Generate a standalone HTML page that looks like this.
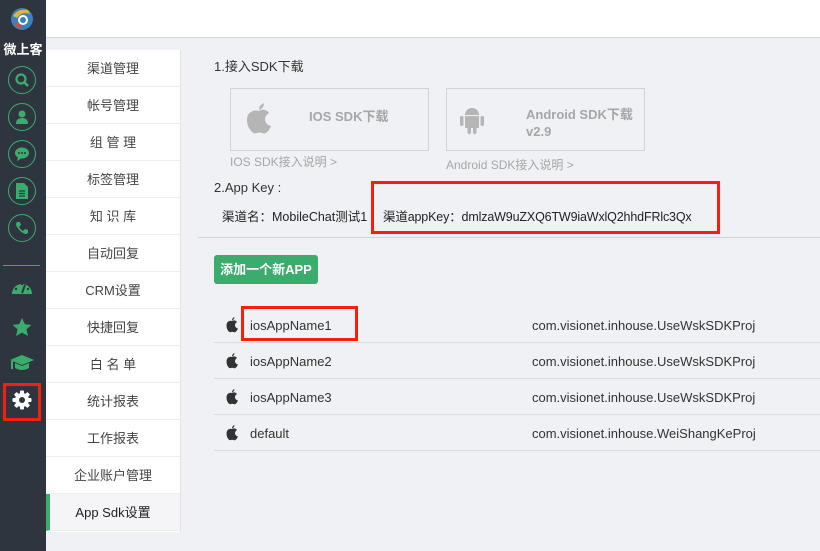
<!DOCTYPE html>
<html><head><meta charset="utf-8"><style>
*{margin:0;padding:0;box-sizing:border-box}
body{width:820px;height:551px;overflow:hidden;background:#f0f1f5;font-family:"Liberation Sans","Noto Sans CJK SC",sans-serif;position:relative;font-size:13px;color:#333}
.side{position:absolute;left:0;top:0;width:46px;height:551px;background:#2e353e}
.top{position:absolute;left:46px;top:0;width:774px;height:38px;background:#fff;border-bottom:1px solid #d9d9d9}
.menu{position:absolute;left:46px;top:50px;width:135px;height:482px;background:#fff;border-right:1px solid #e3e3e3}
.menu div{height:37px;line-height:37px;text-align:center;border-bottom:1px solid #eee;color:#444;font-size:13px}
.menu div.act{background:#f5f5f7;border-left:4px solid #3aad6c;color:#222;padding-right:4px}
.circ{position:absolute;left:8px;width:28px;height:28px;border:1.5px solid #3aad6c;border-radius:50%}
.abs{position:absolute}
.box{position:absolute;border:1px solid #d3d3d3;width:199px;height:63px}
.gray{color:#a6a6a6;font-weight:bold;font-size:13px}
.red{position:absolute;border:3px solid #f2200c}
.row{position:absolute;left:214px;width:606px;height:36px;border-bottom:1px solid #dcdcdc;font-size:13px;color:#333}
.row span{position:absolute;top:11px}
</style></head><body>
<div class="side">
 <svg class="abs" style="left:10px;top:6px" width="24" height="26" viewBox="0 0 24 26"><circle cx="12" cy="13" r="11" fill="#3a7fc0"/><path d="M3 10 Q8 2 18 4 L20 8 Q12 5 7 12Z" fill="#e8b23a"/><path d="M4 16 Q6 22 12 23 L10 18Z" fill="#d94a3a"/><circle cx="13" cy="14" r="5" fill="#fff"/><circle cx="13" cy="14" r="3" fill="#3a7fc0"/></svg>
 <div class="abs" style="left:0;top:39px;width:46px;text-align:center;color:#fff;font-weight:bold;font-size:13px">微上客</div>
 <div class="circ" style="top:66px"></div>
 <svg class="abs" style="left:14px;top:72px" width="16" height="16" viewBox="0 0 16 16"><circle cx="7" cy="7" r="4.5" stroke="#3aad6c" stroke-width="2.2" fill="none"/><path d="M10 10l4 4" stroke="#3aad6c" stroke-width="2.5"/></svg>
 <div class="circ" style="top:103px"></div>
 <svg class="abs" style="left:14px;top:109px" width="16" height="16" viewBox="0 0 16 16"><circle cx="8" cy="5" r="3.5" fill="#3aad6c"/><path d="M2 15 Q2 9 8 9 Q14 9 14 15Z" fill="#3aad6c"/></svg>
 <div class="circ" style="top:140px"></div>
 <svg class="abs" style="left:14px;top:146px" width="16" height="16" viewBox="0 0 16 16"><ellipse cx="8" cy="7" rx="7" ry="5.5" fill="#3aad6c"/><path d="M4 11 L3 15 L8 12Z" fill="#3aad6c"/><circle cx="5" cy="7" r="1" fill="#2e353e"/><circle cx="8" cy="7" r="1" fill="#2e353e"/><circle cx="11" cy="7" r="1" fill="#2e353e"/></svg>
 <div class="circ" style="top:177px"></div>
 <svg class="abs" style="left:15px;top:183px" width="14" height="16" viewBox="0 0 14 16"><path d="M1 0h8l4 4v12H1Z" fill="#3aad6c"/><path d="M4 8h6M4 10.5h6M4 13h6" stroke="#2e353e" stroke-width="1.2"/></svg>
 <div class="circ" style="top:214px"></div>
 <svg class="abs" style="left:14px;top:220px" width="16" height="16" viewBox="0 0 16 16"><path d="M3 2 L6 2 L7 5 L5 7 Q7 10 9 11 L11 9 L14 10 L14 13 Q12 15 9 13 Q4 10 2 5 Q2 3 3 2Z" fill="#3aad6c"/></svg>
 <div class="abs" style="left:3px;top:265px;width:37px;height:1px;background:#3aad6c"></div>
 <svg class="abs" style="left:11px;top:279px" width="22" height="16" viewBox="0 0 22 16"><path d="M1 15 A10 10 0 0 1 21 15Z" fill="#3aad6c"/><path d="M11 14 L14 6" stroke="#2e353e" stroke-width="2"/><circle cx="5" cy="10" r="1.2" fill="#2e353e"/><circle cx="11" cy="5" r="1.2" fill="#2e353e"/><circle cx="17" cy="10" r="1.2" fill="#2e353e"/></svg>
 <svg class="abs" style="left:12px;top:318px" width="20" height="19" viewBox="0 0 20 19"><path d="M10 0 L12.9 6.2 L19.5 6.9 L14.5 11.3 L15.9 18 L10 14.6 L4.1 18 L5.5 11.3 L0.5 6.9 L7.1 6.2Z" fill="#3aad6c"/></svg>
 <svg class="abs" style="left:10px;top:354px" width="24" height="18" viewBox="0 0 24 18"><path d="M0 6 L12 1 L24 6 L12 11Z" fill="#3aad6c"/><path d="M5 9 L5 14 Q12 18 19 14 L19 9 L12 12Z" fill="#3aad6c"/><path d="M2 7 L2 15" stroke="#3aad6c" stroke-width="2"/></svg>
 <svg class="abs" style="left:12px;top:390px" width="20" height="20" viewBox="0 0 20 20"><g fill="#fff"><circle cx="10" cy="10" r="7"/><rect x="8" y="0.5" width="4" height="19" rx="1"/><rect x="8" y="0.5" width="4" height="19" rx="1" transform="rotate(45 10 10)"/><rect x="8" y="0.5" width="4" height="19" rx="1" transform="rotate(90 10 10)"/><rect x="8" y="0.5" width="4" height="19" rx="1" transform="rotate(135 10 10)"/></g><circle cx="10" cy="10" r="3" fill="#2e353e"/></svg>
 <div class="red" style="left:3px;top:383px;width:38px;height:38px"></div>
</div>
<div class="top"></div>
<div class="menu">
<div>渠道管理</div><div>帐号管理</div><div>组 管 理</div><div>标签管理</div><div>知 识 库</div><div>自动回复</div><div>CRM设置</div><div>快捷回复</div><div>白 名 单</div><div>统计报表</div><div>工作报表</div><div>企业账户管理</div><div class="act">App Sdk设置</div>
</div>
<div class="abs" style="left:214px;top:56px;font-size:13px">1.接入SDK下载</div>
<div class="box" style="left:230px;top:88px"></div>
<svg class="abs" style="left:246px;top:103px" width="26" height="31" viewBox="0 0 26 31"><path d="M13 8 Q16 6 19 7 Q22 8 23 10 Q19 12 19 17 Q20 22 25 23 Q23 28 20 30 Q18 31 16 30 Q13 29 11 30 Q8 31 6 29 Q1 24 1 17 Q1 10 7 8 Q10 7 13 8Z" fill="#b5b5b5"/><path d="M13 7 Q13 2 18 0 Q18 5 13 7Z" fill="#b5b5b5"/></svg>
<div class="abs gray" style="left:309px;top:106px">IOS SDK下载</div>
<div class="abs" style="left:230px;top:153px;color:#a6a6a6;font-size:12px">IOS SDK接入说明 &gt;</div>
<div class="box" style="left:446px;top:88px"></div>
<svg class="abs" style="left:459px;top:105px" width="26" height="30" viewBox="0 0 26 30"><path d="M6 10 A7 7 0 0 1 20 10Z" fill="#b5b5b5"/><rect x="6" y="11" width="14" height="12" rx="1" fill="#b5b5b5"/><rect x="1" y="11" width="3.5" height="10" rx="1.7" fill="#b5b5b5"/><rect x="21.5" y="11" width="3.5" height="10" rx="1.7" fill="#b5b5b5"/><rect x="8.5" y="20" width="3.5" height="9" rx="1.7" fill="#b5b5b5"/><rect x="14" y="20" width="3.5" height="9" rx="1.7" fill="#b5b5b5"/></svg>
<div class="abs gray" style="left:526px;top:106px;line-height:17px">Android SDK下载<br>v2.9</div>
<div class="abs" style="left:446px;top:156px;color:#a6a6a6;font-size:12px">Android SDK接入说明 &gt;</div>
<div class="abs" style="left:214px;top:180px">2.App Key :</div>
<div class="abs" style="left:222px;top:206px;color:#222;font-size:12.5px">渠道名：MobileChat测试1</div>
<div class="abs" style="left:383px;top:206px;color:#222;font-size:12.5px;letter-spacing:-0.15px">渠道appKey：dmlzaW9uZXQ6TW9iaWxlQ2hhdFRlc3Qx</div>
<div class="red" style="left:371px;top:181px;width:349px;height:53px"></div>
<div class="abs" style="left:198px;top:237px;width:622px;height:1px;background:#d4d4d4"></div>
<div class="abs" style="left:214px;top:255px;width:104px;height:29px;background:#3aad6c;border-radius:3px;color:#fff;font-weight:bold;font-size:13px;line-height:29px;text-align:center">添加一个新APP</div>
<div class="row" style="top:307px"><span style="left:36px">iosAppName1</span><span style="left:318px">com.visionet.inhouse.UseWskSDKProj</span></div>
<div class="row" style="top:343px"><span style="left:36px">iosAppName2</span><span style="left:318px">com.visionet.inhouse.UseWskSDKProj</span></div>
<div class="row" style="top:379px"><span style="left:36px">iosAppName3</span><span style="left:318px">com.visionet.inhouse.UseWskSDKProj</span></div>
<div class="row" style="top:415px"><span style="left:36px">default</span><span style="left:318px">com.visionet.inhouse.WeiShangKeProj</span></div>
<svg width="0" height="0" style="position:absolute"><defs><path id="ap" d="M6 4 Q7.5 3 9 3.5 Q10.5 4 11 5 Q9 6 9 8.5 Q9.5 11 12 11.5 Q11 14 9.5 15 Q8.5 15.5 7.5 15 Q6 14.5 5 15 Q3.5 15.5 2.7 14.5 Q0.5 12 0.5 8.5 Q0.5 5 3.3 4 Q4.8 3.5 6 4Z M6 3.5 Q6 1 8.5 0 Q8.5 2.5 6 3.5Z" fill="#333"/></defs></svg>
<svg class="abs" style="left:226px;top:317px" width="12" height="16"><use href="#ap"/></svg>
<svg class="abs" style="left:226px;top:353px" width="12" height="16"><use href="#ap"/></svg>
<svg class="abs" style="left:226px;top:389px" width="12" height="16"><use href="#ap"/></svg>
<svg class="abs" style="left:226px;top:425px" width="12" height="16"><use href="#ap"/></svg>
<div class="red" style="left:241px;top:306px;width:117px;height:35px"></div>
</body></html>
